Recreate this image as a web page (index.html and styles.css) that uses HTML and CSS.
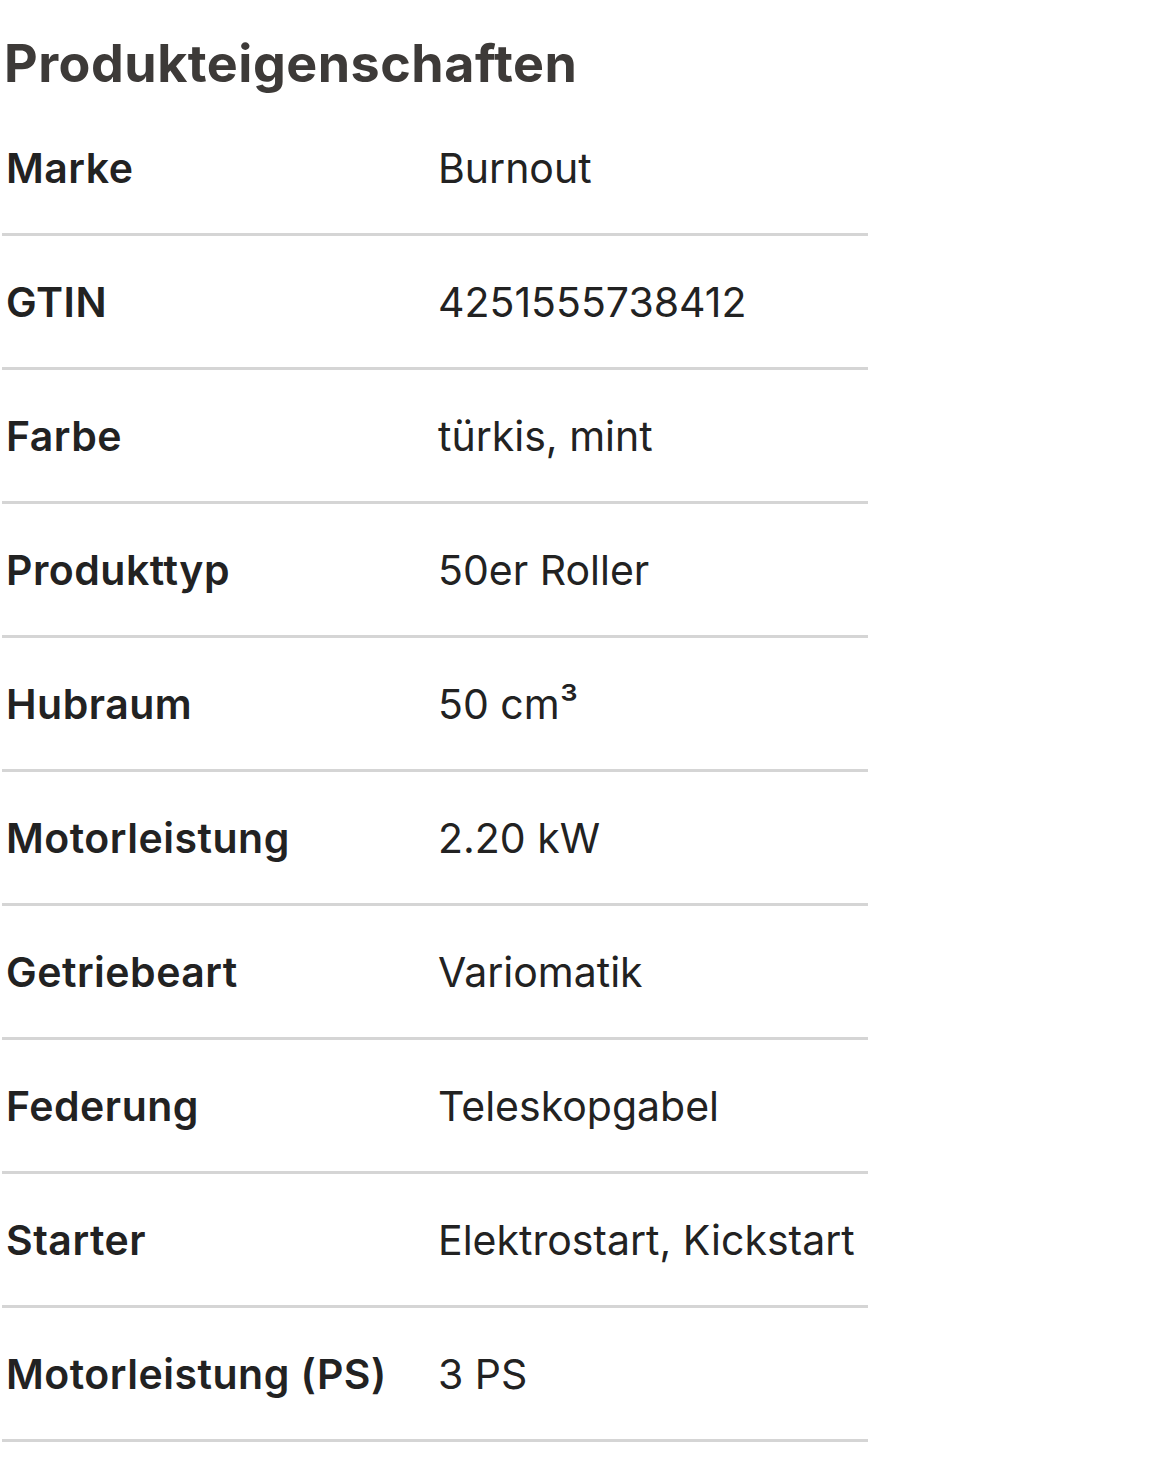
FILE: index.html
```html
<!DOCTYPE html>
<html lang="de">
<head>
<meta charset="utf-8">
<title>Produkteigenschaften</title>
<link rel="stylesheet" href="styles.css">
</head>
<body>
<section class="props">
  <h2 class="props-title">Produkteigenschaften</h2>
  <dl class="props-list">
    <div class="row"><dt>Marke</dt><dd>Burnout</dd></div>
    <div class="row"><dt>GTIN</dt><dd>4251555738412</dd></div>
    <div class="row"><dt>Farbe</dt><dd>türkis, mint</dd></div>
    <div class="row"><dt>Produkttyp</dt><dd>50er Roller</dd></div>
    <div class="row"><dt>Hubraum</dt><dd>50 cm³</dd></div>
    <div class="row"><dt>Motorleistung</dt><dd>2.20 kW</dd></div>
    <div class="row"><dt>Getriebeart</dt><dd>Variomatik</dd></div>
    <div class="row"><dt>Federung</dt><dd>Teleskopgabel</dd></div>
    <div class="row"><dt>Starter</dt><dd>Elektrostart, Kickstart</dd></div>
    <div class="row"><dt>Motorleistung (PS)</dt><dd>3 PS</dd></div>
  </dl>
</section>
</body>
</html>
```
FILE: styles.css
```css
html, body {
  margin: 0;
  padding: 0;
  background: #ffffff;
}
body {
  font-family: Inter, "Noto Sans", sans-serif;
  color: #222222;
}
.props {
  width: 866px;
  padding: 0 0 0 2px;
}
.props-title {
  margin: 0 0 8px 0;
  padding: 34px 0 0 2px;
  font-family: Inter, sans-serif;
  font-weight: 700;
  font-size: 52px;
  line-height: 60px;
  letter-spacing: 0.5px;
  color: #3d3a38;
}
.props-list {
  margin: 0;
  padding: 0;
}
.row {
  display: grid;
  grid-template-columns: 436px 1fr;
  align-items: center;
  height: 134px;
  box-sizing: border-box;
  border-bottom: 3px solid #d5d5d5;
}
.row dt {
  margin: 0;
  padding-left: 4px;
  font-weight: 600;
  font-size: 41px;
  letter-spacing: 0.5px;
  color: #222222;
}
.row dd {
  margin: 0;
  font-size: 41px;
  color: #222222;
}
```
